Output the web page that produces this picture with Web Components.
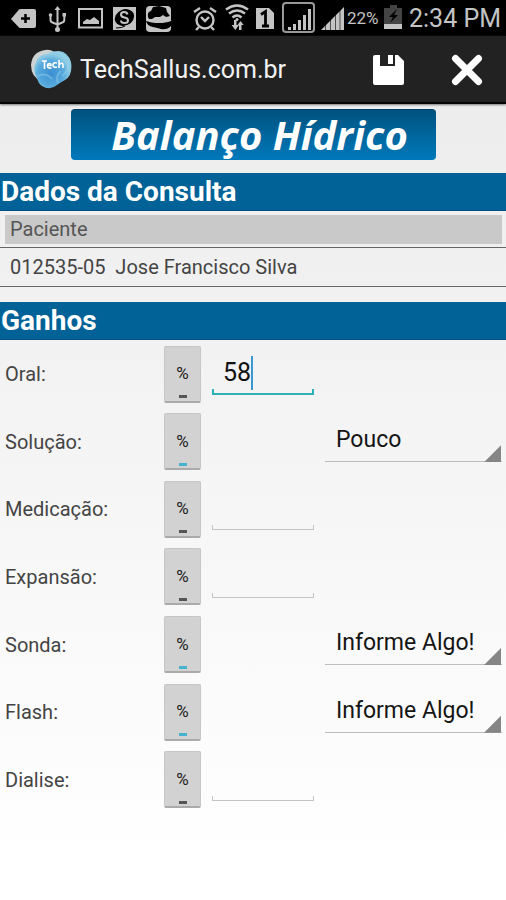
<!DOCTYPE html>
<html lang="pt-BR">
<head>
<meta charset="utf-8">
<meta name="viewport" content="width=device-width, initial-scale=1">
<title>Balanço Hídrico</title>
<style>
body { margin: 0; font-family: Roboto, "Liberation Sans", sans-serif; color: #444; }
</style>
</head>
<body>
<fluid-balance-app></fluid-balance-app>

<template id="status-bar-tpl">
<style>
:host { display: flex; align-items: center; justify-content: space-between; height: 36px; padding: 0 5px 0 10px; background: #000; color: #c4c4c4; }
div { display: flex; align-items: center; white-space: nowrap; }
.left { gap: 8px; }
.right { gap: 4px; }
svg { display: block; fill: #c4c4c4; }
.line { fill: none; stroke: #c4c4c4; stroke-width: 2; }
.pct { font-size: 17px; width: 32px; margin-left: -2px; }
time { font-size: 25px; margin-left: 2px; }
</style>
<div class="left">
  <svg width="26" height="36" viewBox="0 0 26 36"><path d="M1 19 9 9.500Q9.500 9 11 9H24Q26 9 26 11V26Q26 28 24 28H11Q9.500 28 9 27.500Z"/><path d="M11 18.500h9M15.500 14v9" stroke="#000" stroke-width="2.500"/></svg>
  <svg width="26" height="36" viewBox="0 0 26 36"><path d="M10.500 10 13.500 6l3 4z"/><circle cx="13.500" cy="29.500" r="2.500"/><circle cx="6.500" cy="15" r="1.800"/><path d="M18.500 13h3.500v3.500h-3.500z"/><path class="line" d="M13.500 9v20M6.500 16v4q0 2 2 2.500l5 2M20.300 16v4q0 2-2 2.500l-4.800 2"/></svg>
  <svg width="26" height="36" viewBox="0 0 26 36"><path class="line" d="M1 9h23v18.500H1z"/><path d="M5 24v-2l4-3 3 1 4-3 5 4v3z"/></svg>
  <svg width="26" height="36" viewBox="0 0 26 36"><rect x="1" y="7" width="23" height="23"/><ellipse cx="12.500" cy="17.500" rx="10" ry="8" transform="rotate(-25 12.500 17.500)" fill="#000"/><path d="M15.500 14.500q-.5-2.500-3.500-2.500-3 0-3 2.500t3.500 3q3.500.5 3.500 3t-3.500 2.500-3.500-2.500" class="line"/><path d="M4 28q6 0 9-2" fill="none" stroke="#000"/></svg>
  <svg width="26" height="36" viewBox="0 0 26 36"><rect x="0" y="6" width="25" height="26" rx="4"/><path d="M2 17Q1 12 5 11l2-4 6-1 7 2 1 4 3 4-4 1-3-2-3 2-5 0-3 2-3 0Z" fill="#000"/><path d="M0 21q5 2 12 2 8 0 13-2v5q-4 4-10 3-3-1-8-2-6-1-7-6Z" fill="#000"/><path d="M6 20.500q6 2 13 0v1.500q-7 2-13 0Z"/></svg>
</div>
<div class="right">
  <svg width="28" height="36" viewBox="0 0 28 36"><g class="line"><circle cx="13" cy="20" r="8.500" stroke-width="2.400"/><path d="m9 17 4 4 4-4M2 12l6-4M24 12l-6-4M7 27l-3 3M19 27l3 3" stroke-width="2.400"/></g></svg>
  <svg width="26" height="36" viewBox="0 0 26 36"><g class="line"><path d="M2 9.500q11-8 22 0M5 13.500q8-6 16 0M8.500 17.500q4.500-4 9 0" style="stroke-width:2.600"/></g><circle cx="13" cy="19.500" r="1.500"/><path d="M10 20h2.500v5h2.500l-3.700 5-3.700-5H10zM15 30v-5h-1.500l3-4 3.200 4h-2.200v5z"/></svg>
  <svg width="22" height="36" viewBox="0 0 22 36"><path d="M2 8h13l5 5v16H2z"/><path d="M7 14.500 11.500 11.500V26M8 26h7" stroke="#000" stroke-width="2.800" fill="none"/></svg>
  <svg width="36" height="36" viewBox="0 0 36 36"><rect class="line" x="3" y="3" width="31" height="29" rx="3" style="stroke:#999"/><path d="M8 27h3v3H8zM13 24h3v6h-3zM18 20h3v10h-3zM23 15h3v15h-3zM28 9h3v21h-3z"/></svg>
  <svg width="25" height="36" viewBox="0 0 25 36"><path d="M1 30 24 7v23z"/><path d="M5.500 15v16M10.500 12v19M15.500 8v23M20 6v25" stroke="#000" stroke-opacity=".6" stroke-width="1"/></svg>
  <span class="pct">22%</span>
  <svg width="20" height="36" viewBox="0 0 20 36"><path d="M7 5h7v3h5v16H1V8h6z" fill="#444"/><path d="M1 24h18v5H1z"/><path d="m14 9-8 8h4l-3 6 8-8h-4z" fill="#000"/></svg>
  <time>2:34 PM</time>
</div>
</template>

<template id="app-bar-tpl">
<style>
:host { display: flex; align-items: center; height: 66px; padding: 0 22px 0 30px; background: #222; border-bottom: 2px solid #050505; box-shadow: 0 1px 2px #777; color: #f2f2f2; position: relative; }
.title { flex: 1; margin-left: 8px; padding-top: 2px; font-size: 25px; line-height: 32px; font-weight: 400; }
nav { display: flex; gap: 46px; padding-top: 2px; }
button { border: 0; padding: 0; background: none; display: block; }
svg { display: block; }
</style>
<svg width="42" height="42" viewBox="0 0 42 42" aria-hidden="true">
  <defs><radialGradient id="g" cx=".45" cy=".6"><stop offset="0" stop-color="#3a8ed2"/><stop offset=".7" stop-color="#56aadd"/><stop offset="1" stop-color="#8ccbe4"/></radialGradient></defs>
  <path d="M1 17Q2 4 15 2q6-1 10 3v20L12 34Q1 29 1 17Z" fill="#cdd3d2"/>
  <path d="M6 14Q9 6 18 6q3-3 11-3 9 1 12 11 2 13-6 18-4 2-8 5-7 6-15 1-4-3-5-8-5-7-1-16Z" fill="url(#g)"/>
  <path d="M20 5q13-2 18 9 2 8-6 14M8 28q8-4 14 3M28 35q-3-7 3-12" fill="none" stroke="#a4d8ea" opacity=".4" stroke-width="2"/>
  <path d="M12 13h5M14.500 13v8M18 17.500h3q0-2-1.500-2-2 0-2 2.500t4 2M27 15q-4-1-4 2t4 2M29 12v8M29 17q4-4 4 0v3" fill="none" stroke="#fff" stroke-width="1.600"/>
</svg>
<span class="title">TechSallus.com.br</span>
<nav>
  <button type="button" aria-label="Salvar"><svg width="32" height="36" viewBox="0 0 32 36"><path d="M1 5Q1 3 3 3H8V14H23V3H26L32 9V31Q32 33 30 33H3Q1 33 1 31Z" fill="#fff"/><path d="M16 3h5v9h-5z" fill="#fff"/></svg></button>
  <button type="button" aria-label="Fechar"><svg width="34" height="36" viewBox="0 0 34 36"><path d="M5.500 6.500 28.500 29.500M28.500 6.500 5.500 29.500" stroke="#fff" stroke-width="7" stroke-linecap="round"/></svg></button>
</nav>
</template>

<template id="page-banner-tpl">
<style>
:host { display: flex; justify-content: center; padding: 5px 70px 13px 71px; }
h1 { flex: 1; margin: 0; padding: 0 0 0 12px; border-radius: 4px; text-align: center; font: italic 700 40px/50px "Open Sans", "Noto Sans", sans-serif; color: #fff; background: linear-gradient(#00527f, #0079bb); border-top: 1px solid #003e66; white-space: nowrap; }
</style>
<h1><slot></slot></h1>
</template>

<template id="section-title-tpl">
<style>
:host { display: block; background: #006297; border-bottom: 1px solid #004f80; color: #fff; }
h2 { margin: 0; padding: 0 1px; font-size: 28px; line-height: 37px; font-weight: 700; }
</style>
<h2><slot></slot></h2>
</template>

<template id="patient-card-tpl">
<style>
:host { display: block; padding-top: 4px; margin-bottom: 15px; font-size: 20px; }
.head { margin: 0 4px 3px 5px; padding: 0 5px; line-height: 29px; background: #c9c9c9; color: #555; }
.row { padding: 0 10px; line-height: 38px; border: 1px solid #666; border-width: 1px 0; white-space: pre; }
</style>
<div class="head">Paciente</div>
<div class="row"><slot></slot></div>
</template>

<template id="gain-row-tpl">
<style>
:host { display: grid; grid-template-columns: 159px 48px 113px 1fr; align-items: center; padding: 1px 4px 0 5px; }
label { font-size: 20px; line-height: 28px; }
.toggle { width: 37px; height: 57px; box-sizing: border-box; padding: 0; display: grid; grid-template-rows: 1fr 8px; justify-items: center; align-items: center; font: 400 17px/20px Roboto, sans-serif; color: #222; background: #d2d2d2; border: 1px solid #c6c6c6; border-bottom: 2px solid #aaa; border-radius: 2px; }
.toggle span { padding-top: 7px; }
.toggle::after { content: ""; width: 8px; height: 3px; background: #555; }
.toggle[aria-pressed="true"]::after { background: #48b1cb; }
.field { display: flex; align-items: center; height: 42px; box-sizing: border-box; position: relative; padding-left: 11px; border-bottom: 1px solid #c4c4c4; width: 102px; }
.field::after { content: ""; position: absolute; left: 0; right: 0; bottom: 0; height: 4px; border: 1px solid #c4c4c4; border-width: 0 1px; }
input { min-width: 0; width: 76px; border: 0; padding: 0; background: none; outline: 0; font: 25px/32px Roboto, sans-serif; color: #111; caret-color: transparent; }
.field.active { border-bottom: 2px solid #2fb0b8; }
.field.active::after { border-color: #2fb0b8; border-width: 0 2px; }
.field.active input { field-sizing: content; width: auto; }
.caret { width: 2px; height: 34px; background: #3a97cf; }
.choice { grid-column: 4; height: 40px; border-bottom: 1px solid #bdbdbd; position: relative; }
.choice::after { content: ""; position: absolute; right: 1px; bottom: -1px; width: 17px; height: 17px; background: #858585; clip-path: polygon(100% 0, 100% 100%, 0 100%); pointer-events: none; }
select { appearance: none; width: 100%; height: 38px; border: 0; padding: 0 18px 0 11px; background: none; font: 23px/32px Roboto, sans-serif; color: #151515; }
</style>
<label for="value"></label>
<button class="toggle" type="button"><span>%</span></button>
</template>

<template id="fluid-balance-app-tpl">
<style>
:host { display: flex; flex-direction: column; min-height: 100vh; background: linear-gradient(#ededed 100px, #f2f2f2 350px, #fff 860px); }
form { flex: 1; display: grid; grid-auto-rows: 1fr; padding-bottom: 87px; }
</style>
<status-bar></status-bar>
<app-bar></app-bar>
<page-banner>Balanço Hídrico</page-banner>
<section-title>Dados da Consulta</section-title>
<patient-card>012535-05  Jose Francisco Silva</patient-card>
<section-title>Ganhos</section-title>
<form>
  <gain-row label="Oral" type="number" value="58" active></gain-row>
  <gain-row label="Solução" type="choice" value="Pouco"></gain-row>
  <gain-row label="Medicação" type="number"></gain-row>
  <gain-row label="Expansão" type="number"></gain-row>
  <gain-row label="Sonda" type="choice" value="Informe Algo!"></gain-row>
  <gain-row label="Flash" type="choice" value="Informe Algo!"></gain-row>
  <gain-row label="Dialise" type="number"></gain-row>
</form>
</template>

<script>
class TemplateElement extends HTMLElement {
  constructor() {
    super();
    const tpl = document.getElementById(this.localName + '-tpl');
    this.attachShadow({ mode: 'open' }).append(document.importNode(tpl.content, true));
  }
}
class GainRow extends TemplateElement {
  connectedCallback() {
    const root = this.shadowRoot;
    if (root.querySelector('#value')) return;
    const name = this.getAttribute('label');
    const value = this.getAttribute('value') || '';
    const isChoice = this.getAttribute('type') === 'choice';
    root.querySelector('label').textContent = name + ':';
    const toggle = root.querySelector('.toggle');
    toggle.setAttribute('aria-pressed', String(isChoice));
    const box = document.createElement('div');
    if (isChoice) {
      box.className = 'choice';
      const select = document.createElement('select');
      select.id = 'value';
      select.add(new Option(value));
      box.append(select);
    } else {
      box.className = 'field';
      const input = document.createElement('input');
      input.id = 'value';
      input.inputMode = 'numeric';
      input.value = value;
      box.append(input);
      if (this.hasAttribute('active')) {
        box.classList.add('active');
        const caret = document.createElement('span');
        caret.className = 'caret';
        box.append(caret);
      }
    }
    root.append(box);
  }
}
for (const tag of ['status-bar', 'app-bar', 'page-banner', 'section-title', 'patient-card'])
  customElements.define(tag, class extends TemplateElement {});
customElements.define('gain-row', GainRow);
customElements.define('fluid-balance-app', class extends TemplateElement {});
</script>
</body>
</html>
